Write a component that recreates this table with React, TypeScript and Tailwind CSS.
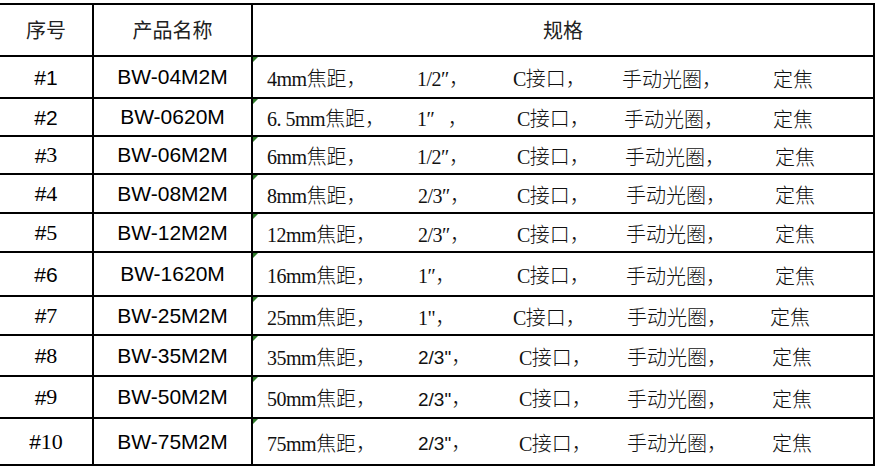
import React from "react";

type Row = {
  no: string;
  noSerif: boolean;
  model: string;
  seg: string[];
  sizeSans?: boolean;
  w: string[];
  h: string;
};

const rows: Row[] = [
  { no: "1", noSerif: false, model: "BW-04M2M", seg: ["4mm焦距，", "1/2″，", "C接口，", "手动光圈，", "定焦"], w: ["w-[150px]", "w-[96px]", "w-[109px]", "w-[151px]"], h: "h-[42px]" },
  { no: "2", noSerif: false, model: "BW-0620M", seg: ["6. 5mm焦距，", "1″   ，", "C接口，", "手动光圈，", "定焦"], w: ["w-[150px]", "w-[100px]", "w-[107px]", "w-[149px]"], h: "h-[38px]" },
  { no: "3", noSerif: true, model: "BW-06M2M", seg: ["6mm焦距，", "1/2″，", "C接口，", "手动光圈，", "定焦"], w: ["w-[150px]", "w-[100px]", "w-[108px]", "w-[150px]"], h: "h-[38px]" },
  { no: "4", noSerif: true, model: "BW-08M2M", seg: ["8mm焦距，", "2/3″，", "C接口，", "手动光圈，", "定焦"], w: ["w-[151px]", "w-[99px]", "w-[109px]", "w-[149px]"], h: "h-[39px]" },
  { no: "5", noSerif: true, model: "BW-12M2M", seg: ["12mm焦距，", "2/3″，", "C接口，", "手动光圈，", "定焦"], w: ["w-[151px]", "w-[99px]", "w-[109px]", "w-[149px]"], h: "h-[39px]" },
  { no: "6", noSerif: false, model: "BW-1620M", seg: ["16mm焦距，", "1″，", "C接口，", "手动光圈，", "定焦"], w: ["w-[151px]", "w-[99px]", "w-[109px]", "w-[149px]"], h: "h-[44px]" },
  { no: "7", noSerif: true, model: "BW-25M2M", seg: ["25mm焦距，", "1\"，", "C接口，", "手动光圈，", "定焦"], w: ["w-[151px]", "w-[95px]", "w-[114px]", "w-[143px]"], h: "h-[39px]" },
  { no: "8", noSerif: true, model: "BW-35M2M", seg: ["35mm焦距，", "2/3\"，", "C接口，", "手动光圈，", "定焦"], sizeSans: true, w: ["w-[151px]", "w-[101px]", "w-[108px]", "w-[145px]"], h: "h-[41px]" },
  { no: "9", noSerif: true, model: "BW-50M2M", seg: ["50mm焦距，", "2/3\"，", "C接口，", "手动光圈，", "定焦"], sizeSans: true, w: ["w-[151px]", "w-[101px]", "w-[108px]", "w-[145px]"], h: "h-[42px]" },
  { no: "10", noSerif: true, model: "BW-75M2M", seg: ["75mm焦距，", "2/3\"，", "C接口，", "手动光圈，", "定焦"], sizeSans: true, w: ["w-[151px]", "w-[101px]", "w-[108px]", "w-[145px]"], h: "h-[47px]" },
];

function Mixed({ text, sans }: { text: string; sans?: boolean }) {
  const parts = text.split(/([^\x00-\x7F″]+)/).filter((p) => p.length > 0);
  return (
    <>
      {parts.map((p, i) =>
        /[^\x00-\x7F″]/.test(p) ? (
          <span key={i} className="font-['Noto_Sans_CJK_SC',sans-serif] text-[20px] font-light text-[#111]">
            {p}
          </span>
        ) : sans ? (
          <span key={i} className="font-['Liberation_Sans',sans-serif] text-[19px] whitespace-pre text-[#111]">
            {p}
          </span>
        ) : (
          <span key={i} className="font-['Liberation_Serif','DejaVu_Serif',serif] text-[20px] tracking-[-0.5px] whitespace-pre text-[#111]">
            {p}
          </span>
        )
      )}
    </>
  );
}

export default function App() {
  return (
    <div className="w-[878px] h-[469px] bg-white pt-[3px] overflow-hidden">
      <div className="w-[875px] border-t-2 border-r-2 border-black">
        <div className="flex h-[52px] border-b-2 border-black">
          <div className="w-[94px] shrink-0 border-r-2 border-black flex items-center justify-center font-['Noto_Sans_CJK_SC',sans-serif] text-[20px] text-[#222]">
            序号
          </div>
          <div className="w-[159px] shrink-0 border-r-2 border-black flex items-center justify-center font-['Noto_Sans_CJK_SC',sans-serif] text-[20px] text-[#222]">
            产品名称
          </div>
          <div className="flex-1 flex items-center justify-center font-['Noto_Sans_CJK_SC',sans-serif] text-[20px] text-[#222]">
            规格
          </div>
        </div>
        {rows.map((r) => (
          <div key={r.no} className={`flex border-b-2 border-black ${r.h}`}>
            <div className="w-[94px] shrink-0 border-r-2 border-black flex items-center justify-center text-[21px] text-black leading-none">
              <span className="font-['Liberation_Sans',sans-serif]">#</span>
              <span className={r.noSerif ? "font-['Liberation_Serif',serif] text-[22px]" : "font-['Liberation_Sans',sans-serif]"}>{r.no}</span>
            </div>
            <div className="w-[159px] shrink-0 border-r-2 border-black flex items-center justify-center font-['Liberation_Sans',sans-serif] text-[21px] text-black">
              {r.model}
            </div>
            <div className="relative flex-1 flex items-center pl-[14px] pt-[3px]">
              <div className="absolute left-0 top-0 w-0 h-0 border-t-[5px] border-t-[#2f7a2a] border-r-[5px] border-r-transparent" />
              <div className={`${r.w[0]} shrink-0 whitespace-nowrap`}>
                <Mixed text={r.seg[0]} />
              </div>
              <div className={`${r.w[1]} shrink-0 whitespace-nowrap`}>
                <Mixed text={r.seg[1]} sans={r.sizeSans} />
              </div>
              <div className={`${r.w[2]} shrink-0 whitespace-nowrap`}>
                <Mixed text={r.seg[2]} />
              </div>
              <div className={`${r.w[3]} shrink-0 whitespace-nowrap`}>
                <Mixed text={r.seg[3]} />
              </div>
              <div className="whitespace-nowrap">
                <Mixed text={r.seg[4]} />
              </div>
            </div>
          </div>
        ))}
      </div>
    </div>
  );
}
